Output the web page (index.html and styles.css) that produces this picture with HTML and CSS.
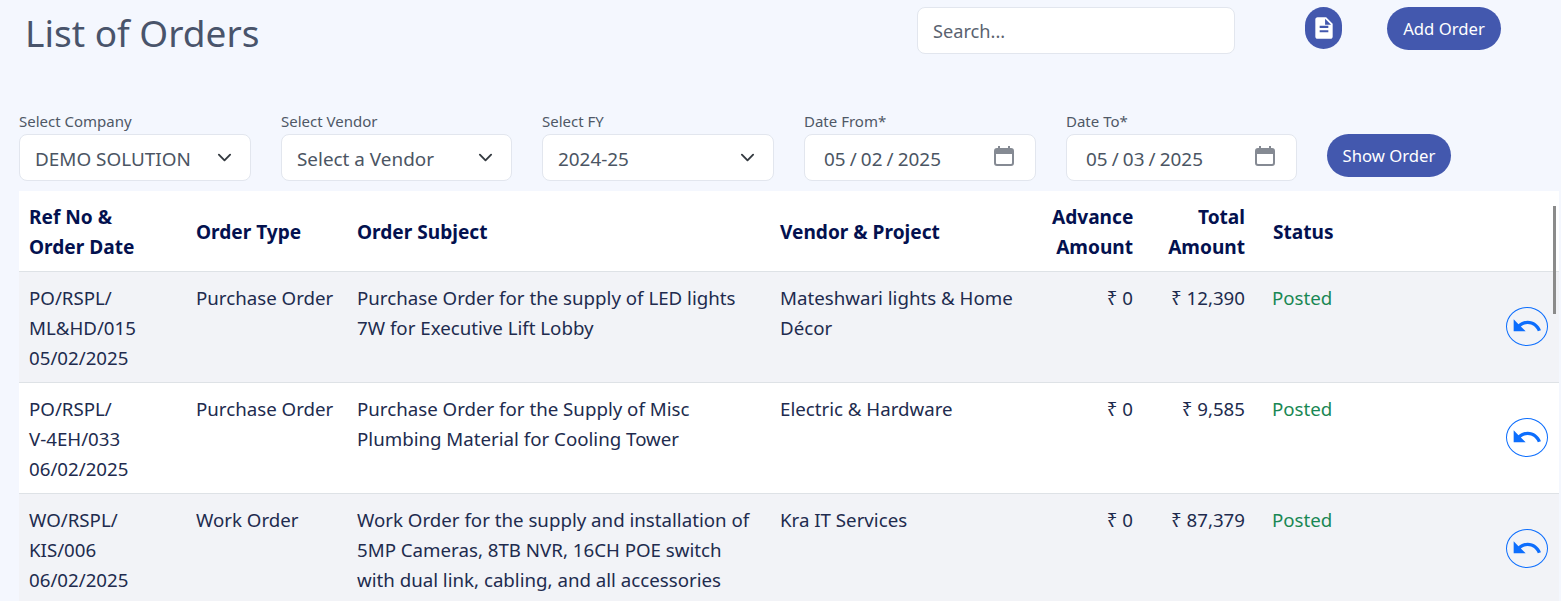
FILE: index.html
```html
<!DOCTYPE html>
<html lang="en">
<head>
<meta charset="utf-8">
<title>List of Orders</title>
<link rel="stylesheet" href="styles.css">
</head>
<body>
<header class="top">
  <h1 class="title">List of Orders</h1>
  <input class="search" type="text" placeholder="Search...">
  <button class="pill doc" aria-label="Document">
    <svg viewBox="0 0 24 24" width="26" height="26"><path fill="#fff" d="M14 2H6c-1.100 0-2 .9-2 2v16c0 1.100.9 2 2 2h12c1.100 0 2-.9 2-2V8l-6-6zm2 14H8v-2h8v2zm0-4H8v-2h8v2zm-3-3V3.500L18.500 9H13z"/></svg>
  </button>
  <button class="pill add">Add Order</button>
</header>
<section class="filters">
  <div class="field"><label>Select Company</label>
    <div class="control select">DEMO SOLUTION<svg class="chev" viewBox="0 0 16 16" width="15" height="15"><path fill="none" stroke="#343a40" stroke-width="2" stroke-linecap="round" stroke-linejoin="round" d="M2 5l6 6 6-6"/></svg></div></div>
  <div class="field"><label>Select Vendor</label>
    <div class="control select">Select a Vendor<svg class="chev" viewBox="0 0 16 16" width="15" height="15"><path fill="none" stroke="#343a40" stroke-width="2" stroke-linecap="round" stroke-linejoin="round" d="M2 5l6 6 6-6"/></svg></div></div>
  <div class="field"><label>Select FY</label>
    <div class="control select">2024-25<svg class="chev" viewBox="0 0 16 16" width="15" height="15"><path fill="none" stroke="#343a40" stroke-width="2" stroke-linecap="round" stroke-linejoin="round" d="M2 5l6 6 6-6"/></svg></div></div>
  <div class="field"><label>Date From*</label>
    <div class="control date">05 / 02 / 2025<svg class="cal" viewBox="0 0 20 20" width="20" height="20"><path fill="#858a93" d="M4 0h2v2h8V0h2v2h1a3 3 0 0 1 3 3v12a3 3 0 0 1-3 3H3a3 3 0 0 1-3-3V5a3 3 0 0 1 3-3h1V0zM2 8v9a1 1 0 0 0 1 1h14a1 1 0 0 0 1-1V8H2z"/></svg></div></div>
  <div class="field"><label>Date To*</label>
    <div class="control date">05 / 03 / 2025<svg class="cal" viewBox="0 0 20 20" width="20" height="20"><path fill="#858a93" d="M4 0h2v2h8V0h2v2h1a3 3 0 0 1 3 3v12a3 3 0 0 1-3 3H3a3 3 0 0 1-3-3V5a3 3 0 0 1 3-3h1V0zM2 8v9a1 1 0 0 0 1 1h14a1 1 0 0 0 1-1V8H2z"/></svg></div></div>
  <button class="pill show">Show Order</button>
</section>
<main class="wrap">
  <table class="orders">
    <thead>
      <tr>
        <th class="c-ref">Ref No &amp;<br>Order Date</th>
        <th class="c-type">Order Type</th>
        <th class="c-subj">Order Subject</th>
        <th class="c-vend">Vendor &amp; Project</th>
        <th class="c-adv num">Advance<br>Amount</th>
        <th class="c-tot num">Total<br>Amount</th>
        <th class="c-stat">Status</th>
        <th class="c-act"></th>
      </tr>
    </thead>
    <tbody>
      <tr>
        <td>PO/RSPL/<br>ML&amp;HD/015<br>05/02/2025</td>
        <td>Purchase Order</td>
        <td>Purchase Order for the supply of LED lights 7W for Executive Lift Lobby</td>
        <td>Mateshwari lights &amp; Home Décor</td>
        <td class="num">₹ 0</td>
        <td class="num">₹ 12,390</td>
        <td class="posted">Posted</td>
        <td class="act"><button class="undo" aria-label="Revert"><svg viewBox="0 0 24 24" width="32" height="32"><path fill="#0d6efd" d="M12.500 8c-2.650 0-5.050.99-6.900 2.600L2 7v9h9l-3.620-3.620c1.390-1.160 3.160-1.880 5.120-1.880 3.540 0 6.550 2.310 7.600 5.500l2.370-.78C21.080 11.030 17.150 8 12.500 8z"/></svg></button></td>
      </tr>
      <tr>
        <td>PO/RSPL/<br>V-4EH/033<br>06/02/2025</td>
        <td>Purchase Order</td>
        <td>Purchase Order for the Supply of Misc Plumbing Material for Cooling Tower</td>
        <td>Electric &amp; Hardware</td>
        <td class="num">₹ 0</td>
        <td class="num">₹ 9,585</td>
        <td class="posted">Posted</td>
        <td class="act"><button class="undo" aria-label="Revert"><svg viewBox="0 0 24 24" width="32" height="32"><path fill="#0d6efd" d="M12.500 8c-2.650 0-5.050.99-6.900 2.600L2 7v9h9l-3.620-3.620c1.390-1.160 3.160-1.880 5.120-1.880 3.540 0 6.550 2.310 7.600 5.500l2.370-.78C21.080 11.030 17.150 8 12.500 8z"/></svg></button></td>
      </tr>
      <tr>
        <td>WO/RSPL/<br>KIS/006<br>06/02/2025</td>
        <td>Work Order</td>
        <td>Work Order for the supply and installation of 5MP Cameras, 8TB NVR, 16CH POE switch with dual link, cabling, and all accessories</td>
        <td>Kra IT Services</td>
        <td class="num">₹ 0</td>
        <td class="num">₹ 87,379</td>
        <td class="posted">Posted</td>
        <td class="act"><button class="undo" aria-label="Revert"><svg viewBox="0 0 24 24" width="32" height="32"><path fill="#0d6efd" d="M12.500 8c-2.650 0-5.050.99-6.900 2.600L2 7v9h9l-3.620-3.620c1.390-1.160 3.160-1.880 5.120-1.880 3.540 0 6.550 2.310 7.600 5.500l2.370-.78C21.080 11.030 17.150 8 12.500 8z"/></svg></button></td>
      </tr>
    </tbody>
  </table>
  <div class="thumb"></div>
</main>
</body>
</html>
```
FILE: styles.css
```css
* { box-sizing: border-box; }
html, body { height: 100%; }
body {
  margin: 0;
  height: 601px;
  overflow: hidden;
  background: #f4f7fe;
  font-family: "Noto Sans", sans-serif;
  font-size: 18px;
  color: #0c1c44;
}
.top {
  display: flex;
  align-items: flex-start;
  height: 112px;
  padding: 7px 0 0 25px;
}
.title {
  margin: 0;
  width: 892px;
  font-size: 37px;
  line-height: 52px;
  font-weight: 400;
  color: #49546b;
}
.search {
  width: 318px;
  height: 47px;
  padding: 0 15px;
  font: 18.200px "Noto Sans", sans-serif;
  color: #4b5563;
  background: #fff;
  border: 1px solid #e2e6ee;
  border-radius: 8px;
  outline: none;
}
.search::placeholder { color: #5a6270; opacity: 1; }
.pill {
  display: flex;
  align-items: center;
  justify-content: center;
  border: 0;
  border-radius: 24px;
  background: #4358ae;
  color: #fff;
  font: 16.700px "Noto Sans", sans-serif;
  padding: 0 0 1px;
}
.doc { width: 37px; height: 42px; margin-left: 70px; }
.add { width: 114px; height: 43px; margin-left: 45px; }
.filters {
  display: flex;
  align-items: flex-end;
  padding-left: 19px;
  height: 69px;
  gap: 30px;
}
.field { display: flex; flex-direction: column; width: 232px; }
.field:nth-child(2), .field:nth-child(5) { width: 231px; }
.field label {
  font-size: 15px;
  line-height: 20px;
  color: #4f5866;
  margin-bottom: 3px;
}
.control {
  display: flex;
  align-items: center;
  justify-content: space-between;
  height: 47px;
  background: #fff;
  border: 1px solid #e2e6ee;
  border-radius: 8px;
  color: #4b5563;
  font-size: 18.900px;
  line-height: 28px;
}
.select { padding: 2px 18px 0 15px; }
.date { padding: 2px 21px 0 19px; word-spacing: -0.800px; }
.chev { margin-top: -2px; }
.cal { margin-top: -5px; }
.show { width: 124px; height: 43px; margin-bottom: 4px; }
.wrap {
  position: relative;
  margin: 10px 2px 0 19px;
  height: 420px;
  overflow: hidden;
  background: #fff;
}
.orders {
  width: 100%;
  table-layout: fixed;
  border-collapse: collapse;
}
.orders th, .orders td {
  padding: 11px 10px 9px;
  line-height: 30px;
  font-size: 18.700px;
  text-align: left;
  border-bottom: 1px solid #dee2e6;
  vertical-align: top;
}
.orders th {
  font-size: 19.100px;
  font-weight: 700;
  color: #03114f;
  vertical-align: middle;
}
.orders td { color: #212b4e; }
.orders tbody tr:nth-child(odd) td { background: #f2f3f7; }
.orders .num { text-align: right; }
.c-ref { width: 167px; }
.c-type { width: 161px; }
.c-subj { width: 423px; }
.c-vend { width: 272px; }
.c-adv { width: 101px; }
.c-tot { width: 112px; }
.c-stat { width: 205px; }
.orders .c-stat { padding-left: 18px; }
.orders .posted { padding-left: 17px; color: #198754; }
.orders .act { padding: 0 11px 2px 0; text-align: right; vertical-align: middle; }
.undo {
  display: inline-flex;
  align-items: center;
  justify-content: center;
  width: 42px;
  height: 39px;
  padding: 0;
  background: transparent;
  border: 1px solid #0d6efd;
  border-radius: 50%;
  vertical-align: middle;
}
.thumb {
  position: absolute;
  top: 15px;
  right: 3px;
  width: 3px;
  height: 108px;
  background: #8b8b8b;
}
```
